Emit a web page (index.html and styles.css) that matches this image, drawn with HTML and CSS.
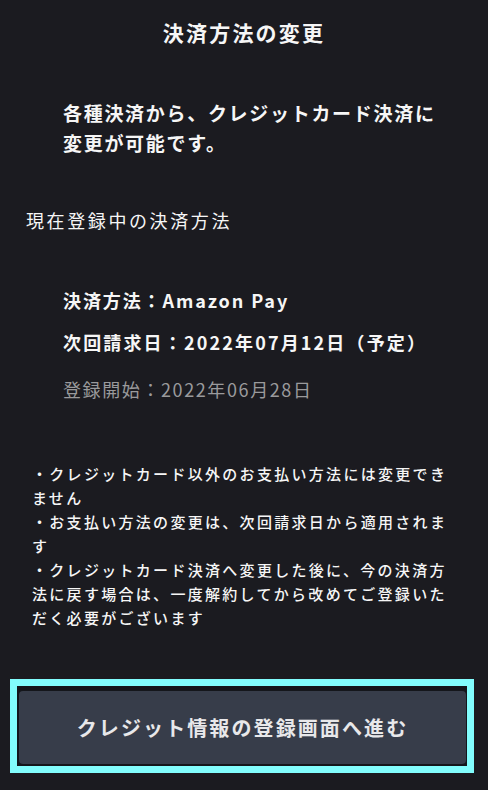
FILE: index.html
```html
<!DOCTYPE html>
<html lang="ja">
<head>
<meta charset="utf-8">
<title>決済方法の変更</title>
<link rel="stylesheet" href="styles.css">
</head>
<body>
<main class="page">
  <h1 class="title">決済方法の変更</h1>
  <p class="lead">各種決済から、クレジットカード決済に変更が可能です。</p>
  <h2 class="label">現在登録中の決済方法</h2>
  <div class="info">
    <p class="row row-1">決済方法：Amazon Pay</p>
    <p class="row row-2">次回請求日：2022年07月12日（予定）</p>
    <p class="row row-muted">登録開始：2022年06月28日</p>
  </div>
  <ul class="notes">
    <li>・クレジットカード以外のお支払い方法には変更できません</li>
    <li>・お支払い方法の変更は、次回請求日から適用されます</li>
    <li>・クレジットカード決済へ変更した後に、今の決済方法に戻す場合は、一度解約してから改めてご登録いただく必要がございます</li>
  </ul>
  <div class="focus-ring">
    <button class="cta" type="button">クレジット情報の登録画面へ進む</button>
  </div>
</main>
</body>
</html>
```
FILE: styles.css
```css
html, body {
  margin: 0;
  padding: 0;
  background: #1b1b20;
}
body {
  font-family: "Noto Sans CJK JP", "Noto Sans", sans-serif;
  color: #f6f6f6;
}
.page {
  display: flex;
  flex-direction: column;
  width: 488px;
  height: 790px;
  overflow: hidden;
}
.title {
  margin: 17px 0 0;
  font-size: 21px;
  line-height: 30px;
  font-weight: 700;
  letter-spacing: 2.2px;
  text-align: center;
}
.lead {
  margin: 51px 40px 0 63px;
  font-size: 19px;
  line-height: 30px;
  font-weight: 700;
  letter-spacing: 1.7px;
}
.label {
  margin: 47px 0 0 26px;
  font-size: 18px;
  line-height: 30px;
  font-weight: 400;
  letter-spacing: 2.6px;
}
.info {
  display: flex;
  flex-direction: column;
  margin: 50px 0 0 63px;
}
.row {
  margin: 0;
  font-size: 18px;
  line-height: 30px;
  font-weight: 700;
  letter-spacing: 1.9px;
}
.row-2 {
  margin-top: 12px;
  letter-spacing: 2.15px;
}
.row-muted {
  margin-top: 17px;
  color: #9a9a9c;
  font-weight: 400;
  letter-spacing: 1.6px;
}
.notes {
  list-style: none;
  margin: 58px 0 0 32px;
  padding: 0;
  width: 422px;
  font-size: 15px;
  line-height: 24px;
  font-weight: 500;
  letter-spacing: 2.3px;
}
.notes li {
  margin: 0;
}
.focus-ring {
  margin: 49px 0 0 10px;
  width: 464px;
  height: 94px;
  box-sizing: border-box;
  border: 7px solid #82fdfd;
  background: #14161b;
  padding: 5px 1px 2px 2px;
  display: flex;
}
.cta {
  flex: 1;
  border: none;
  border-radius: 4px;
  background: #373d4a;
  color: #e8e8ea;
  font-family: "Noto Sans CJK JP", "Noto Sans", sans-serif;
  font-size: 20px;
  font-weight: 700;
  letter-spacing: 2.1px;
  padding: 0;
  margin: 0;
}
```
